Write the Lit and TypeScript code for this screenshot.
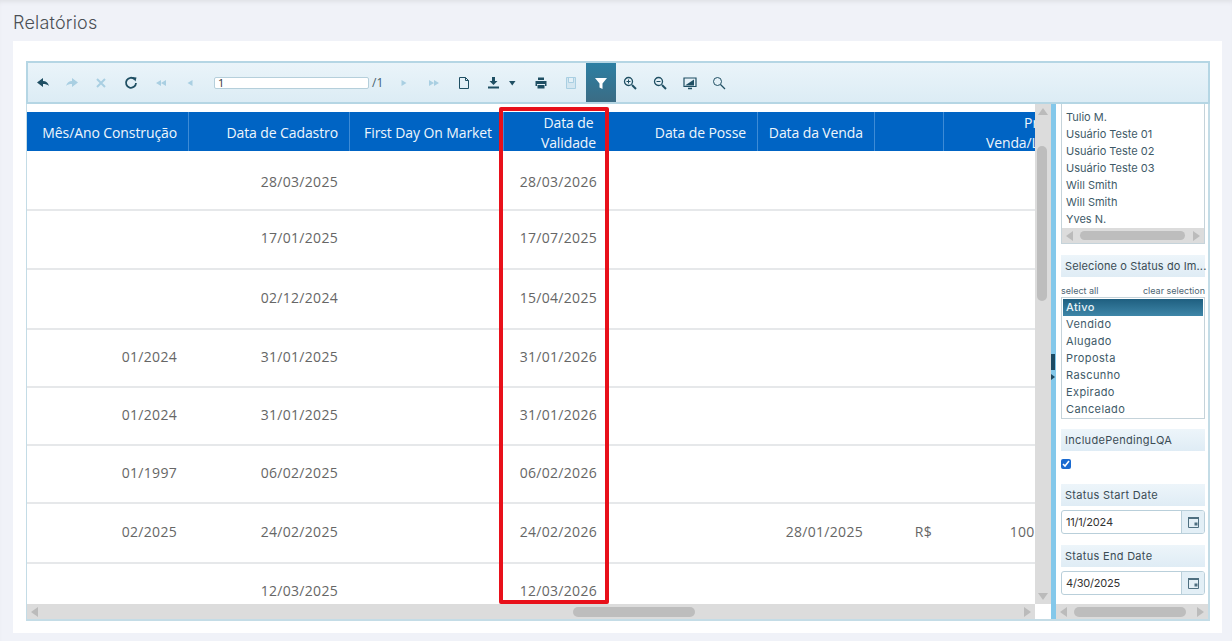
import { LitElement, html, css, svg } from "lit";
import { customElement } from "lit/decorators.js";

const columns = [162, 161, 154, 105, 149, 117, 69, 152];

const headers = [
  "Mês/Ano Construção",
  "Data de Cadastro",
  "First Day On Market",
  "Data de Validade",
  "Data de Posse",
  "Data da Venda",
  "",
  "Preço de\u00a0 Venda/Locação",
];

const rows = [
  { h: 60, cells: ["", "28/03/2025", "", "28/03/2026", "", "", "", ""] },
  { h: 59, cells: ["", "17/01/2025", "", "17/07/2025", "", "", "", ""] },
  { h: 60, cells: ["", "02/12/2024", "", "15/04/2025", "", "", "", ""] },
  { h: 58, cells: ["01/2024", "31/01/2025", "", "31/01/2026", "", "", "", ""] },
  { h: 58, cells: ["01/2024", "31/01/2025", "", "31/01/2026", "", "", "", ""] },
  { h: 58, cells: ["01/1997", "06/02/2025", "", "06/02/2026", "", "", "", ""] },
  { h: 60, cells: ["02/2025", "24/02/2025", "", "24/02/2026", "", "28/01/2025", "R$", "100.000,00"] },
  { h: 58, cells: ["", "12/03/2025", "", "12/03/2026", "", "", "", ""] },
];

const dark = "#1f4f63";
const faded = "#a9cfe2";

const icon = (width: number, body: unknown) => html`<svg
  width=${width}
  height="14"
  viewBox="0 0 ${width} 14"
>${body}</svg>`;

const tools = [
  { w: 14, gap: 15, body: svg`<path d="M1 6.500 7 2v3c3 0 5 1.500 6 5-1.500-1.500-3.500-2-6-2v3z" fill=${dark}/>` },
  { w: 14, gap: 15, body: svg`<path d="M13 6.500 7 2v3c-3 0-5 1.500-6 5 1.500-1.500 3.500-2 6-2v3z" fill=${faded}/>` },
  { w: 14, gap: 16, body: svg`<path d="M3 3l8 8M11 3l-8 8" stroke=${faded} stroke-width="2"/>` },
  { w: 14, gap: 17, body: svg`<path d="M10.500 3.200A5 5 0 1 0 12 7" fill="none" stroke=${dark} stroke-width="1.800"/><path d="M8 1l4.500.5-1 4z" fill=${dark}/>` },
  { w: 12, gap: 19, body: svg`<path d="M6 4 1 7l5 3zM11 4 6 7l5 3z" fill=${faded}/>` },
  { w: 8, gap: 20, body: svg`<path d="M6.500 4 1.500 7l5 3z" fill=${faded}/>` },
];

const toolsRight = [
  { w: 8, gap: 20, body: svg`<path d="M1.500 4l5 3-5 3z" fill=${faded}/>` },
  { w: 12, gap: 18, body: svg`<path d="M1 4l5 3-5 3zM6 4l5 3-5 3z" fill=${faded}/>` },
  { w: 12, gap: 17, body: svg`<path d="M1.500 1.500h6l3 3v8h-9zM7.500 1.500v3h3" fill="none" stroke=${dark} stroke-width="1"/>` },
  { w: 13, gap: 8, body: svg`<path d="M5 1h3v4h2.500L6.500 9 2.500 5H5z" fill=${dark}/><path d="M1 11.500h11" stroke=${dark} stroke-width="2"/>` },
  { w: 8, gap: 18, body: svg`<path d="M1 5h6.500L4.250 9.500z" fill=${dark}/>` },
  { w: 14, gap: 17, body: svg`<path d="M4 1.500h6V4H4zM1.500 5h11v5H11V8H3v2H1.500zM3.500 9h7v3.500h-7z" fill=${dark}/>` },
  { w: 12, gap: 9, body: svg`<path d="M1.500 1.500h9v11h-9zM3.500 1.500v5h5v-5" fill="#d3e6f0" stroke=${faded}/>` },
];

const zooms = [
  { w: 14, gap: 16, body: svg`<circle cx="5.500" cy="5.500" r="4" fill="none" stroke=${dark} stroke-width="1.300"/><path d="M9 9l4 4" stroke=${dark} stroke-width="2"/><path d="M3.500 5.500h4M5.500 3.500v4" stroke=${dark}/>` },
  { w: 14, gap: 16, body: svg`<circle cx="5.500" cy="5.500" r="4" fill="none" stroke=${dark} stroke-width="1.300"/><path d="M9 9l4 4" stroke=${dark} stroke-width="2"/><path d="M3.500 5.500h4" stroke=${dark}/>` },
  { w: 14, gap: 15, body: svg`<path d="M1 2h12v8.500H1z" fill="none" stroke=${dark} stroke-width="1.200"/><path d="M2 9.500 11 3.500v6z" fill=${dark}/><path d="M5 12.500h4" stroke=${dark} stroke-width="1.500"/>` },
  { w: 14, gap: 0, body: svg`<circle cx="5.500" cy="5.500" r="4" fill="none" stroke=${dark}/><path d="M8.500 8.500l4.500 4.500" stroke=${dark} stroke-width="1.300"/>` },
];

const calendar = html`<svg width="13" height="13" viewBox="0 0 13 13">
  <path d="M1.500 1.500h10v10h-10z" fill="none" stroke="#4e6f80" />
  <path d="M1 1h11v2H1z" fill="#4e6f80" />
  <path d="M7.500 6.500h3v3h-3z" fill="#4e6f80" />
</svg>`;

@customElement("app-root")
export class AppRoot extends LitElement {
  static styles = css`
    :host {
      display: block;
      height: 641px;
      overflow: hidden;
      background: #f0f2f8;
      box-shadow: inset 0 4px 4px -2px #dfe1e6;
      font-family: "Inter", "Noto Sans", sans-serif;
    }
    h1 {
      margin: 0;
      height: 41px;
      padding: 13px 0 0 13px;
      box-sizing: border-box;
      font-size: 18px;
      line-height: 20px;
      font-weight: 300;
      letter-spacing: 0.2px;
      color: #4b4f55;
    }
    .card {
      margin: 0 10px 0 13px;
      height: 592px;
      padding: 20px 12px 0 13px;
      box-sizing: border-box;
      background: #fff;
    }
    .viewer {
      height: 560px;
      display: flex;
      flex-direction: column;
      border-left: 1px solid #c4dce6;
      border-right: 2px solid #c4dce6;
      border-bottom: 2px solid #c4dce6;
      box-sizing: border-box;
    }
    .toolbar {
      flex: none;
      height: 43px;
      margin: 0 -2px 0 -1px;
      padding-left: 8px;
      box-sizing: border-box;
      display: flex;
      align-items: center;
      border: 2px solid #b5d6e4;
      background: linear-gradient(#eaf4f9, #dcecf5);
    }
    .tool {
      display: flex;
      flex: none;
    }
    .page-input {
      width: 150px;
      height: 10px;
      flex: none;
      border: 1px solid #b5cfdb;
      border-radius: 2px;
      background: #fff;
      padding-left: 3px;
      font: 11px/10px "Open Sans", sans-serif;
      color: #333;
    }
    .page-count {
      width: 10px;
      margin: 0 18px 0 3px;
      font: 12px "Open Sans", sans-serif;
      color: #44606e;
      white-space: nowrap;
    }
    .filter {
      flex: none;
      width: 30px;
      height: 39px;
      margin-right: 7px;
      display: flex;
      align-items: center;
      justify-content: center;
      background: linear-gradient(#2d7fa3, #3b6c84);
    }
    .body {
      flex: 1;
      min-height: 0;
      display: flex;
    }
    .report {
      flex: none;
      width: 1024px;
      display: grid;
      grid-template-columns: 1fr 16px;
      grid-template-rows: 1fr 15px;
      position: relative;
    }
    .table-clip {
      overflow: hidden;
      padding-top: 8px;
    }
    .table {
      width: 1069px;
      font-family: "Open Sans", sans-serif;
      font-size: 14px;
    }
    .tr {
      display: flex;
      box-sizing: border-box;
    }
    .head {
      height: 39px;
      background: #0064c4;
      color: #eef6fc;
    }
    .th {
      flex: none;
      box-sizing: border-box;
      padding: 2px 11px 0 8px;
      display: flex;
      align-items: center;
      justify-content: flex-end;
      text-align: right;
      line-height: 20px;
      letter-spacing: -0.1px;
      border-right: 1px solid #3d8bd6;
    }
    .th.center {
      padding-left: 36px;
      text-align: center;
    }
    .row {
      border-bottom: 2px solid #e6e8ea;
      color: #666;
    }
    .td {
      flex: none;
      box-sizing: border-box;
      padding: 0 12px 4px 0;
      display: flex;
      align-items: center;
      justify-content: flex-end;
      white-space: nowrap;
      letter-spacing: 0.3px;
    }
    .row:nth-child(2) .td {
      padding: 2px 12px 0 0;
    }
    .highlight {
      position: absolute;
      left: 472px;
      top: 3px;
      width: 110px;
      height: 497px;
      box-sizing: border-box;
      border: 4px solid #e8101a;
      border-radius: 2px;
    }
    .vbar {
      background: #dcdcdc;
      position: relative;
    }
    .vthumb {
      position: absolute;
      left: 2px;
      top: 42px;
      width: 10px;
      height: 155px;
      border-radius: 5px;
      background: #bdbdbd;
    }
    .hbar {
      background: #dcdcdc;
      position: relative;
    }
    .hthumb {
      position: absolute;
      top: 3px;
      height: 10px;
      border-radius: 5px;
      background: #bdbdbd;
    }
    .arrow {
      position: absolute;
      width: 0;
      height: 0;
      border-style: solid;
      border-color: transparent;
    }
    .left {
      top: 3px;
      left: 4px;
      border-width: 5px 7px 5px 0;
      border-right-color: #bbb;
    }
    .right {
      top: 3px;
      right: 4px;
      border-width: 5px 0 5px 7px;
      border-left-color: #bbb;
    }
    .up {
      top: 4px;
      left: 3px;
      border-width: 0 5px 7px;
      border-bottom-color: #bbb;
    }
    .down {
      bottom: 4px;
      left: 3px;
      border-width: 7px 5px 0;
      border-top-color: #bbb;
    }
    .corner {
      background: #fff;
    }
    .splitter {
      flex: none;
      width: 5px;
      background: #84c8ea;
      position: relative;
    }
    .grip {
      position: absolute;
      left: 0;
      top: 250px;
      width: 4px;
      height: 16px;
      background: #1c4a63;
    }
    .grip-arrow {
      position: absolute;
      left: 0;
      top: 270px;
      width: 0;
      height: 0;
      border-style: solid;
      border-color: transparent;
      border-width: 3px 0 3px 4px;
      border-left-color: #1c4a63;
    }
    .side {
      flex: 1;
      min-width: 0;
      display: flex;
      flex-direction: column;
      color: #31525f;
      font-size: 11px;
    }
    .side-scroll {
      flex: 1;
      min-height: 0;
      padding: 0 3px 0 5px;
      overflow: hidden;
    }
    .listbox {
      border: 1px solid #c5d3da;
      background: #fff;
      padding: 5px 0 0 4px;
      line-height: 17px;
      color: #3e5a68;
    }
    .list-top {
      border-top: 0;
      padding: 5px 0 0 0;
    }
    .list-top .item {
      padding-left: 4px;
    }
    .list-scroll {
      height: 15px;
      margin-top: 0;
      position: relative;
      background: #dcdcdc;
    }
    .list-scroll .hthumb {
      top: 3px;
      height: 9px;
      left: 18px;
      right: 19px;
    }
    .label {
      height: 22px;
      line-height: 22px;
      padding-left: 4px;
      background: linear-gradient(#edf5fa, #dfecf5);
      color: #3b4c55;
      white-space: nowrap;
      letter-spacing: 0.3px;
    }
    .label.narrow {
      margin-top: 11px;
      letter-spacing: 0.12px;
    }
    .links {
      display: flex;
      justify-content: space-between;
      margin-top: 8px;
      height: 12px;
      line-height: 12px;
      font-size: 9px;
      color: #4d6573;
    }
    .status {
      padding: 1px;
      line-height: 17px;
      height: 122px;
      box-sizing: border-box;
      letter-spacing: 0.4px;
    }
    .status .item {
      padding-left: 3px;
    }
    .status .selected {
      background: linear-gradient(#1f5f80, #3e86a8);
      color: #e8f3f8;
      font-weight: 500;
    }
    .check {
      display: block;
      margin: 8px 0 15px;
      width: 10px;
      height: 10px;
      accent-color: #1a6ad0;
    }
    .date {
      margin: 4px 0 11px;
      height: 24px;
      display: flex;
      box-sizing: border-box;
      border: 1px solid #b9cfda;
      border-radius: 3px;
      overflow: hidden;
      background: #fff;
      line-height: 22px;
      color: #333;
      padding-left: 4px;
      letter-spacing: -0.2px;
    }
    .date span {
      flex: 1;
    }
    .cal {
      flex: none;
      width: 22px;
      display: flex;
      align-items: center;
      justify-content: center;
      background: #e3eff6;
      border-left: 1px solid #b9cfda;
    }
    .side-hbar {
      flex: none;
      height: 15px;
      position: relative;
      background: #dcdcdc;
    }
  `;

  private renderTools(list: { w: number; gap: number; body: unknown }[]) {
    return list.map(
      (t) => html`<span class="tool" style="margin-right:${t.gap}px"
        >${icon(t.w, t.body)}</span
      >`
    );
  }

  private renderTable() {
    return html`<div class="table">
      <div class="tr head">
        ${headers.map(
          (h, i) =>
            html`<div class="th ${i === 3 ? "center" : ""}" style="width:${columns[i]}px">${h}</div>`
        )}
      </div>
      ${rows.map(
        (r) => html`<div class="tr row" style="height:${r.h}px">
          ${r.cells.map(
            (c, i) => html`<div class="td" style="width:${columns[i]}px">${c}</div>`
          )}
        </div>`
      )}
    </div>`;
  }

  private renderSide() {
    return html`<div class="side">
      <div class="side-scroll">
        <div class="listbox list-top">
          ${["Tulio M.", "Usuário Teste 01", "Usuário Teste 02", "Usuário Teste 03", "Will Smith", "Will Smith", "Yves N."].map(
            (n) => html`<div class="item">${n}</div>`
          )}
          <div class="list-scroll">
            <i class="arrow left"></i>
            <div class="hthumb"></div>
            <i class="arrow right"></i>
          </div>
        </div>
        <div class="label narrow">Selecione o Status do Im...</div>
        <div class="links"><span>select all</span><span>clear selection</span></div>
        <div class="listbox status">
          ${["Ativo", "Vendido", "Alugado", "Proposta", "Rascunho", "Expirado", "Cancelado"].map(
            (n, i) => html`<div class="item ${i === 0 ? "selected" : ""}">${n}</div>`
          )}
        </div>
        <div class="label" style="margin-top:10px">IncludePendingLQA</div>
        <input class="check" type="checkbox" checked />
        <div class="label">Status Start Date</div>
        <div class="date"><span>11/1/2024</span><div class="cal">${calendar}</div></div>
        <div class="label">Status End Date</div>
        <div class="date"><span>4/30/2025</span><div class="cal">${calendar}</div></div>
      </div>
      <div class="side-hbar">
        <i class="arrow left"></i>
        <div class="hthumb" style="left:18px;right:22px"></div>
        <i class="arrow right"></i>
      </div>
    </div>`;
  }

  render() {
    return html`
      <h1>Relatórios</h1>
      <div class="card">
        <div class="viewer">
          <div class="toolbar">
            ${this.renderTools(tools)}
            <div class="page-input">1</div>
            <span class="page-count">/1</span>
            ${this.renderTools(toolsRight)}
            <div class="filter">
              <svg width="14" height="14" viewBox="0 0 14 14">
                <path d="M1 2h12L8.500 7.500V13l-3-1.500v-4z" fill="#fff" />
              </svg>
            </div>
            ${this.renderTools(zooms)}
          </div>
          <div class="body">
            <div class="report">
              <div class="table-clip">${this.renderTable()}</div>
              <div class="vbar">
                <i class="arrow up"></i>
                <div class="vthumb"></div>
                <i class="arrow down"></i>
              </div>
              <div class="hbar">
                <i class="arrow left"></i>
                <div class="hthumb" style="left:546px;width:122px"></div>
                <i class="arrow right"></i>
              </div>
              <div class="corner"></div>
              <div class="highlight"></div>
            </div>
            <div class="splitter">
              <div class="grip"></div>
              <div class="grip-arrow"></div>
            </div>
            ${this.renderSide()}
          </div>
        </div>
      </div>
    `;
  }
}
